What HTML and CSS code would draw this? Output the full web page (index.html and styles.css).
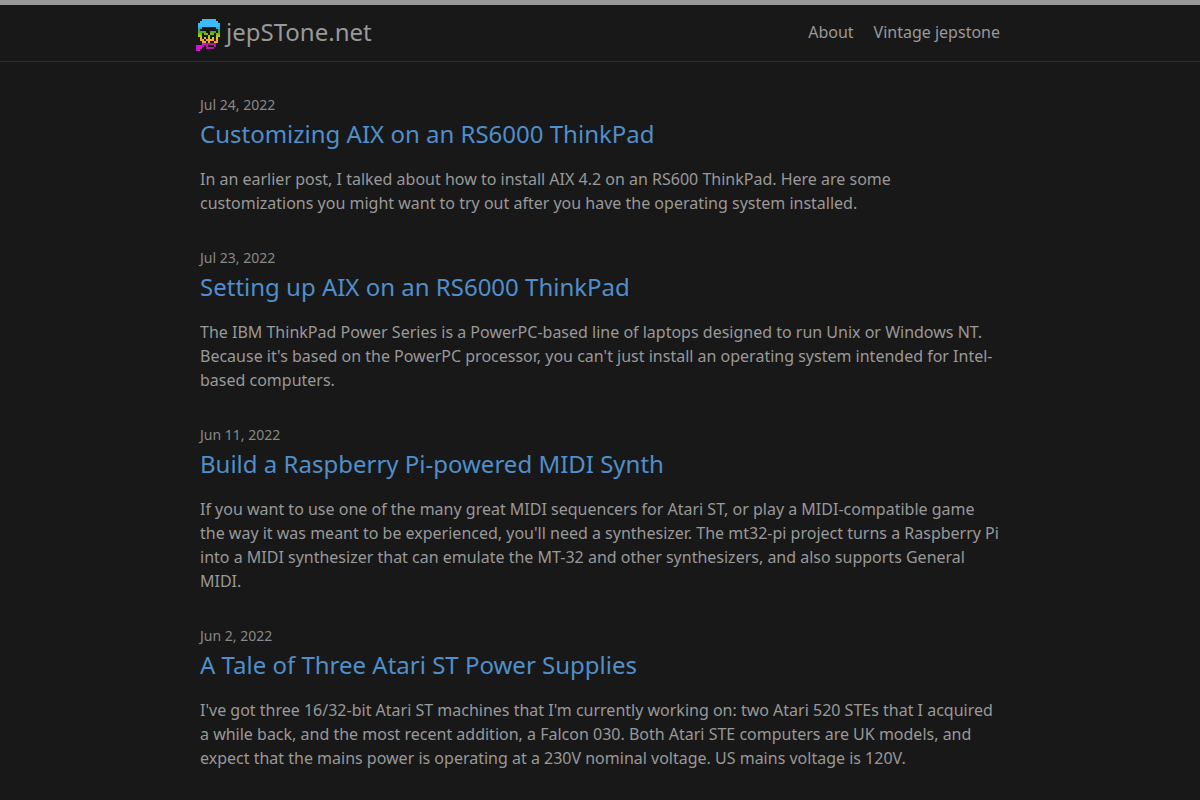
FILE: index.html
```html
<!DOCTYPE html>
<html lang="en">
<head>
  <meta charset="UTF-8">
  <meta name="viewport" content="width=device-width, initial-scale=1">
  <title>jepSTone.net</title>
  <link rel="stylesheet" href="styles.css">
</head>
<body>
  <header class="site-header">
    <div class="wrapper header-row">
      <a class="site-title" href="#">
        <svg class="site-logo" viewBox="0 0 12 16" shape-rendering="crispEdges" aria-hidden="true">
          <path fill="#3abcfa" d="M3 0h7v1H3zM2 1h9v1H2zM1 2h11v1H1zM1 3h11v1H1z"/>
          <path fill="#2fb0c8" d="M1 4h2v1H1zM10 4h2v1H10z"/>
          <path fill="#35a878" d="M1 5h1v1H1zM11 5h1v1H11z"/>
          <path fill="#58a81c" d="M1 6h4v1H1zM7 6h3v1H7zM11 6h1v1H11z"/>
          <path fill="#84b814" d="M1 7h2v1H1zM4 7h2v1H4zM7 7h2v1H7zM10 7h2v1H10z"/>
          <path fill="#b8c018" d="M1 8h2v1H1zM6 8h1v1H6zM10 8h2v1H10z"/>
          <path fill="#f0c020" d="M2 9h1v1H2zM4 9h1v1H4zM6 9h1v1H6zM8 9h1v1H8zM10 9h1v1H10z"/>
          <path fill="#f5a828" d="M2 10h2v1H2zM5 10h4v1H5zM10 10h1v1H10zM3 11h2v1H3zM6 11h1v1H6zM9 11h2v1H9z"/>
          <path fill="#b01c9c" d="M5 12h5v1H5zM5 13h1v1H5zM9 13h1v1H9zM5 14h4v1H5z"/>
          <path fill="#d411d4" d="M3 12h2v1H3zM0 13h4v1H0zM0 14h3v1H0zM0 15h2v1H0z"/>
        </svg>
        <span>jepSTone.net</span>
      </a>
      <nav class="site-nav">
        <a href="#">About</a>
        <a href="#">Vintage jepstone</a>
      </nav>
    </div>
  </header>

  <main class="wrapper page-content">
    <ul class="post-list">
      <li>
        <span class="post-meta">Jul 24, 2022</span>
        <h2><a class="post-link" href="#">Customizing AIX on an RS6000 ThinkPad</a></h2>
        <p>In an earlier post, I talked about how to install AIX 4.2 on an RS600 ThinkPad. Here are some customizations you might want to try out after you have the operating system installed.</p>
      </li>
      <li>
        <span class="post-meta">Jul 23, 2022</span>
        <h2><a class="post-link" href="#">Setting up AIX on an RS6000 ThinkPad</a></h2>
        <p>The IBM ThinkPad Power Series is a PowerPC-based line of laptops designed to run Unix or Windows NT. Because it's based on the PowerPC processor, you can't just install an operating system intended for Intel-based computers.</p>
      </li>
      <li>
        <span class="post-meta">Jun 11, 2022</span>
        <h2><a class="post-link" href="#">Build a Raspberry Pi-powered MIDI Synth</a></h2>
        <p>If you want to use one of the many great MIDI sequencers for Atari ST, or play a MIDI-compatible game the way it was meant to be experienced, you'll need a synthesizer. The mt32-pi project turns a Raspberry Pi into a MIDI synthesizer that can emulate the MT-32 and other synthesizers, and also supports General MIDI.</p>
      </li>
      <li>
        <span class="post-meta">Jun 2, 2022</span>
        <h2><a class="post-link" href="#">A Tale of Three Atari ST Power Supplies</a></h2>
        <p>I've got three 16/32-bit Atari ST machines that I'm currently working on: two Atari 520 STEs that I acquired a while back, and the most recent addition, a Falcon 030. Both Atari STE computers are UK models, and expect that the mains power is operating at a 230V nominal voltage. US mains voltage is 120V.</p>
      </li>
    </ul>
  </main>
</body>
</html>
```
FILE: styles.css
```css
* {
  box-sizing: border-box;
}

body {
  margin: 0;
  background-color: #181818;
  color: #999;
  font-family: "Noto Sans", sans-serif;
  font-size: 16px;
  line-height: 24px;
}

a {
  text-decoration: none;
}

a:hover {
  text-decoration: underline;
}

.wrapper {
  max-width: 860px;
  margin: 0 auto;
  padding: 0 30px;
}

/* Header */
.site-header {
  border-top: 5px solid #999;
  border-bottom: 1px solid #303030;
}

.header-row {
  display: flex;
  justify-content: space-between;
  line-height: 54px;
}

.site-title {
  display: flex;
  gap: 6px;
  margin-left: -4px;
  padding-bottom: 2px;
  color: #999;
  font-size: 24px;
}

.site-logo {
  width: 24px;
  height: 32px;
  margin-top: 14px;
}

.site-nav {
  display: flex;
  gap: 20px;
}

.site-nav a {
  color: #999;
}

/* Posts */
.page-content {
  padding-top: 31px;
  padding-bottom: 31px;
}

.post-list {
  margin: 0;
  padding: 0;
  list-style: none;
}

.post-list li {
  margin-bottom: 31px;
}

.post-meta {
  display: block;
  color: #888;
  font-size: 14px;
}

.post-list h2 {
  margin: 0 0 16px;
  font-size: 24px;
  font-weight: 400;
  line-height: 34px;
}

.post-link {
  color: #4f8fcb;
}

.post-list p {
  margin: 0;
}
```
